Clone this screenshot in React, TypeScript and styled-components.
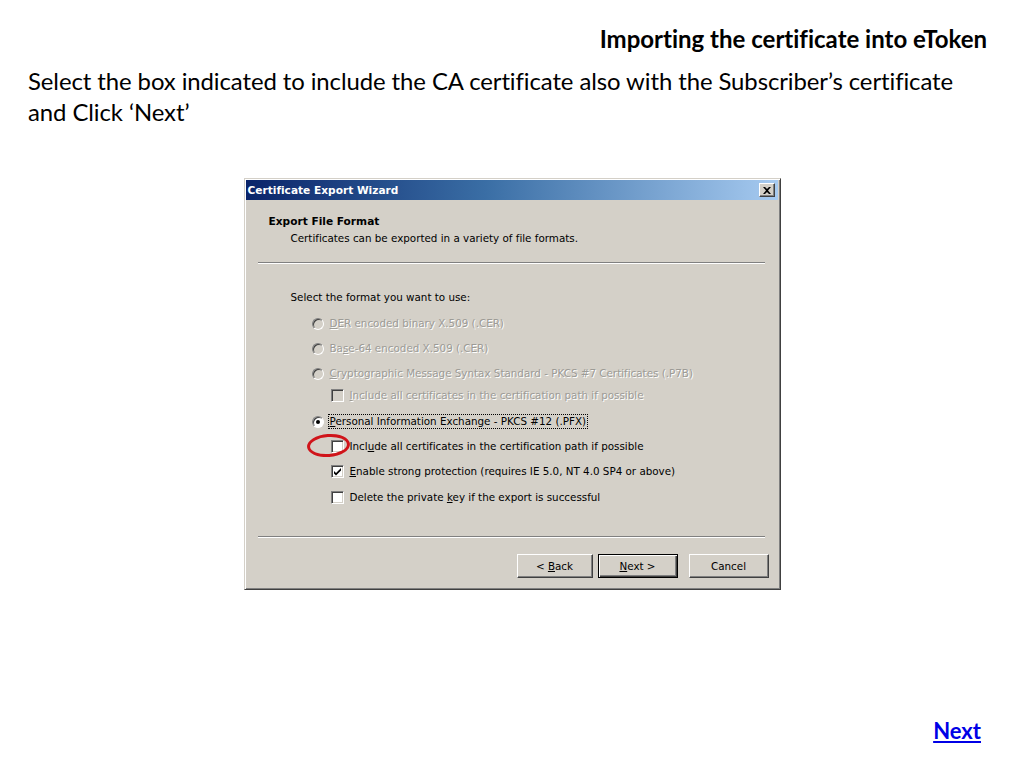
import React from "react";
import styled, { createGlobalStyle } from "styled-components";

const Global = createGlobalStyle`
  html, body { margin: 0; padding: 0; background: #ffffff; }
  #root { width: 1024px; height: 768px; }
`;

const Page = styled.div`
  width: 1024px;
  height: 768px;
  box-sizing: border-box;
  display: flex;
  flex-direction: column;
  padding: 25px 37px 24px 28px;
  font-family: Lato, "Open Sans", sans-serif;
  font-variant-ligatures: none;
  color: #000;
  overflow: hidden;
`;

const SlideTitle = styled.h1`
  margin: 0;
  text-align: right;
  font-size: 24px;
  line-height: 28px;
  font-weight: 700;
`;

const Instruction = styled.p`
  margin: 12px 0 0 0;
  font-size: 23.9px;
  line-height: 31px;
  white-space: nowrap;
  letter-spacing: -0.08px;
`;

const DialogArea = styled.div`
  display: flex;
  justify-content: center;
  margin-top: 51px;
  margin-left: -28px;
  margin-right: -37px;
`;

const Window = styled.div`
  width: 537px;
  height: 412px;
  box-sizing: border-box;
  display: flex;
  flex-direction: column;
  background: #d4d0c8;
  border: 1px solid;
  border-color: #d4d0c8 #404040 #404040 #d4d0c8;
  box-shadow: inset 1px 1px #ffffff, inset -1px -1px #808080;
  padding: 1px 2px 2px 1px;
  font-family: "DejaVu Sans", Verdana, sans-serif;
  font-size: 10.35px;
`;

const TitleBar = styled.div`
  height: 20px;
  flex: none;
  display: flex;
  align-items: center;
  justify-content: space-between;
  padding: 0 3px 0 2px;
  background: linear-gradient(to right, #0a246a 0%, #3a6ea5 45%, #a6caf0 100%);
  color: #ffffff;
  font-weight: 700;
  font-size: 10.6px;
`;

const CloseButton = styled.div`
  width: 16px;
  height: 14px;
  box-sizing: border-box;
  background: #d4d0c8;
  border: 1px solid;
  border-color: #ffffff #404040 #404040 #ffffff;
  box-shadow: inset -1px -1px #808080;
  display: flex;
  align-items: center;
  justify-content: center;
`;

const Body = styled.div`
  flex: 1;
  display: flex;
  flex-direction: column;
  padding: 14px 9px 9px 23px;
`;

const HeaderTitle = styled.div`
  font-weight: 700;
  font-size: 10.6px;
  line-height: 14px;
`;

const HeaderSub = styled.div`
  margin: 3px 0 0 22px;
  line-height: 14px;
`;

const Separator = styled.div<{ $top: number }>`
  margin: ${(p) => p.$top}px 4px 0 -11px;
  height: 0;
  border-top: 1px solid #808080;
  border-bottom: 1px solid #ffffff;
`;

const Prompt = styled.div`
  margin: 26px 0 7px 22px;
  line-height: 14px;
`;

const OptionList = styled.div`
  display: flex;
  flex-direction: column;
`;

const Row = styled.div<{ $indent: number; $shift?: number }>`
  position: relative;
  height: 25px;
  display: flex;
  align-items: center;
  padding-left: ${(p) => p.$indent}px;
  margin-top: ${(p) => p.$shift ?? 0}px;
`;

const Label = styled.span<{ $disabled?: boolean; $focus?: boolean }>`
  line-height: 13px;
  color: ${(p) => (p.$disabled ? "#9c9b96" : "#000000")};
  text-shadow: ${(p) => (p.$disabled ? "1px 1px 0 #ffffff" : "none")};
  outline: ${(p) => (p.$focus ? "1px dotted #000000" : "none")};
  outline-offset: 0px;
  padding: 0 1px;
  white-space: nowrap;
`;

const Radio = styled.span<{ $disabled?: boolean }>`
  position: relative;
  width: 12px;
  height: 12px;
  box-sizing: border-box;
  border-radius: 50%;
  margin-right: 5px;
  border: 1px solid;
  border-color: #808080 #ffffff #ffffff #808080;
  background: ${(p) => (p.$disabled ? "#d4d0c8" : "#ffffff")};
  box-shadow: inset 1px 1px #404040;
  display: flex;
  align-items: center;
  justify-content: center;
  flex: none;
`;

const RadioDot = styled.span`
  width: 4px;
  height: 4px;
  border-radius: 50%;
  background: #000;
`;

const Check = styled.span<{ $disabled?: boolean }>`
  width: 13px;
  height: 13px;
  box-sizing: border-box;
  margin-right: 5px;
  border: 1px solid;
  border-color: #808080 #ffffff #ffffff #808080;
  box-shadow: inset 1px 1px #404040, inset -1px -1px #d4d0c8;
  background: ${(p) => (p.$disabled ? "#d4d0c8" : "#ffffff")};
  display: flex;
  align-items: center;
  justify-content: center;
  flex: none;
`;

const Highlight = styled.span`
  position: absolute;
  left: 38px;
  top: 0px;
  width: 43px;
  height: 23px;
  box-sizing: border-box;
  border: 3px solid #d0141a;
  border-radius: 50%;
  transform: rotate(-4deg);
  pointer-events: none;
`;

const Footer = styled.div`
  margin-top: auto;
  display: flex;
  flex-direction: column;
`;

const ButtonRow = styled.div`
  margin-top: 16px;
  display: flex;
  justify-content: flex-end;
`;

const Button = styled.div<{ $default?: boolean; $gap: number; $w: number }>`
  width: ${(p) => p.$w}px;
  height: 24px;
  box-sizing: border-box;
  margin-left: ${(p) => p.$gap}px;
  display: flex;
  align-items: center;
  justify-content: center;
  background: #d4d0c8;
  border: 1px solid;
  border-color: ${(p) =>
    p.$default ? "#000000" : "#ffffff #404040 #404040 #ffffff"};
  box-shadow: ${(p) =>
    p.$default
      ? "inset 1px 1px #ffffff, inset -1px -1px #404040, inset -2px -2px #808080"
      : "inset -1px -1px #808080"};
  color: #000;
  white-space: pre;
`;

const FooterLinkRow = styled.div`
  margin-top: auto;
  display: flex;
  justify-content: flex-end;
  padding-right: 6px;
`;

const NextLink = styled.a`
  font-size: 22px;
  line-height: 26px;
  font-weight: 700;
  color: #0000e6;
  text-decoration: underline;
  cursor: pointer;
`;

const U = styled.span`
  text-decoration: underline;
`;

const CloseIcon = () => (
  <svg width="8" height="7" viewBox="0 0 8 7">
    <path d="M0 0 L2 0 L4 2 L6 0 L8 0 L5 3.5 L8 7 L6 7 L4 5 L2 7 L0 7 L3 3.5 Z" fill="#000" />
  </svg>
);

const CheckMark = () => (
  <svg width="9" height="9" viewBox="0 0 9 9">
    <path d="M1 4 L3 6 L8 1 L8 3.5 L3 8.5 L1 6.5 Z" fill="#000" />
  </svg>
);

export default function App() {
  return (
    <>
      <Global />
      <Page>
        <SlideTitle>Importing the certificate into eToken</SlideTitle>
        <Instruction>
          Select the box indicated to include the CA certificate also with the Subscriber’s certificate
          <br />
          and Click ‘Next’
        </Instruction>
        <DialogArea>
          <Window>
            <TitleBar>
              <span>Certificate Export Wizard</span>
              <CloseButton>
                <CloseIcon />
              </CloseButton>
            </TitleBar>
            <Body>
              <HeaderTitle>Export File Format</HeaderTitle>
              <HeaderSub>Certificates can be exported in a variety of file formats.</HeaderSub>
              <Separator $top={17} />
              <Prompt>Select the format you want to use:</Prompt>
              <OptionList>
                <Row $indent={43}>
                  <Radio $disabled />
                  <Label $disabled>
                    <U>D</U>ER encoded binary X.509 (.CER)
                  </Label>
                </Row>
                <Row $indent={43}>
                  <Radio $disabled />
                  <Label $disabled>
                    Ba<U>s</U>e-64 encoded X.509 (.CER)
                  </Label>
                </Row>
                <Row $indent={43}>
                  <Radio $disabled />
                  <Label $disabled>
                    <U>C</U>ryptographic Message Syntax Standard - PKCS #7 Certificates (.P7B)
                  </Label>
                </Row>
                <Row $indent={62} $shift={-3}>
                  <Check $disabled />
                  <Label $disabled>
                    <U>I</U>nclude all certificates in the certification path if possible
                  </Label>
                </Row>
                <Row $indent={43} $shift={1}>
                  <Radio>
                    <RadioDot />
                  </Radio>
                  <Label $focus>
                    <U>P</U>ersonal Information Exchange - PKCS #12 (.PFX)
                  </Label>
                </Row>
                <Row $indent={62}>
                  <Check />
                  <Label>
                    Incl<U>u</U>de all certificates in the certification path if possible
                  </Label>
                  <Highlight />
                </Row>
                <Row $indent={62}>
                  <Check>
                    <CheckMark />
                  </Check>
                  <Label>
                    <U>E</U>nable strong protection (requires IE 5.0, NT 4.0 SP4 or above)
                  </Label>
                </Row>
                <Row $indent={62} $shift={1}>
                  <Check />
                  <Label>
                    Delete the private <U>k</U>ey if the export is successful
                  </Label>
                </Row>
              </OptionList>
              <Footer>
                <Separator $top={0} />
                <ButtonRow>
                  <Button $w={76} $gap={0}>
                    <span>
                      {"< "}
                      <U>B</U>ack
                    </span>
                  </Button>
                  <Button $w={80} $gap={5} $default>
                    <span>
                      <U>N</U>ext{" >"}
                    </span>
                  </Button>
                  <Button $w={80} $gap={11}>
                    Cancel
                  </Button>
                </ButtonRow>
              </Footer>
            </Body>
          </Window>
        </DialogArea>
        <FooterLinkRow>
          <NextLink>Next</NextLink>
        </FooterLinkRow>
      </Page>
    </>
  );
}
